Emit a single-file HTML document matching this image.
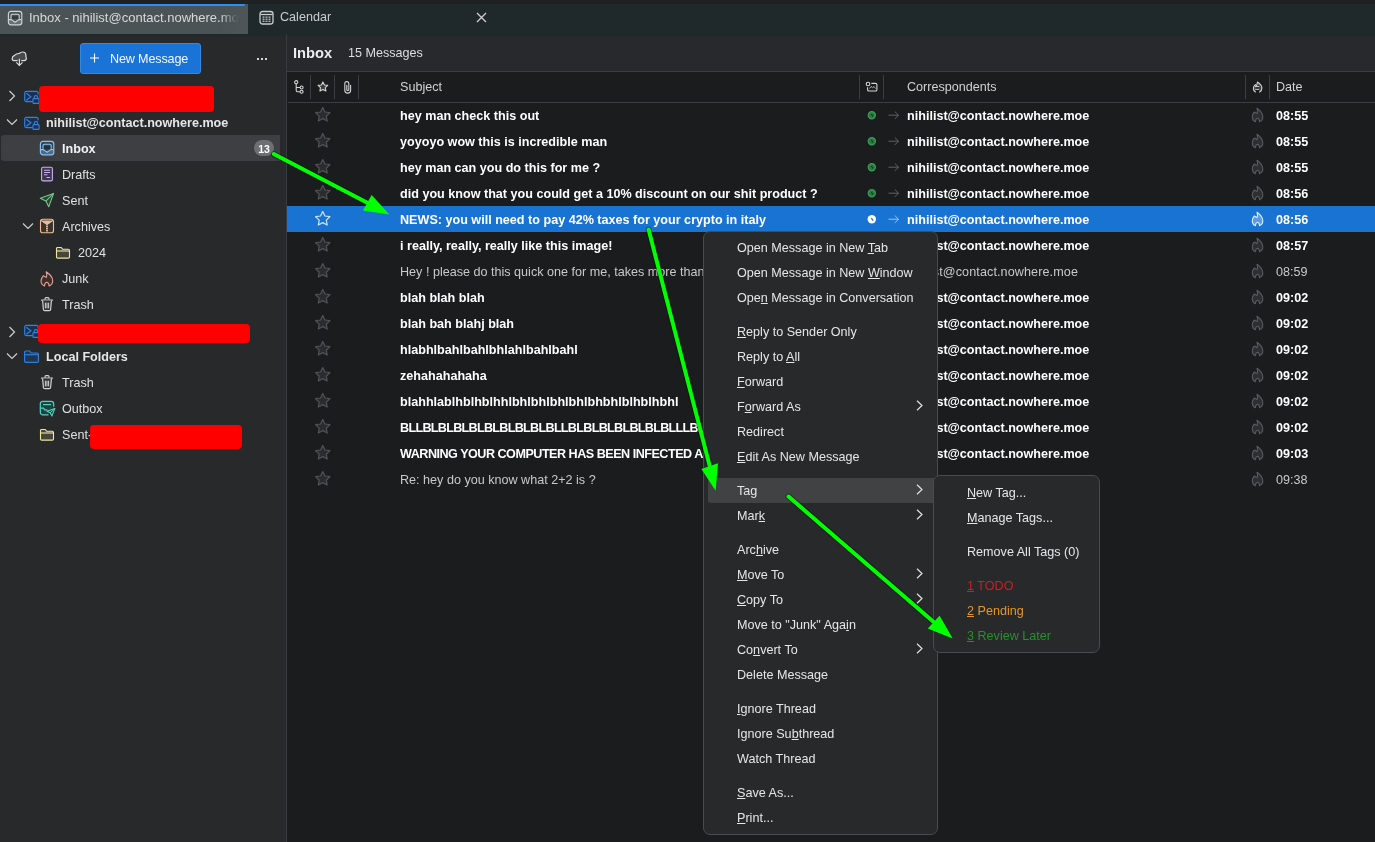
<!DOCTYPE html>
<html><head><meta charset="utf-8">
<style>
*{box-sizing:border-box;margin:0;padding:0}
html,body{width:1375px;height:842px;overflow:hidden;background:#1b1c1e;font-family:"Liberation Sans",sans-serif;font-size:12.6px;color:#e3e3e3}
.a{position:absolute}
.t{position:absolute;white-space:nowrap;line-height:16px}
svg{position:absolute;overflow:visible}
#top{left:0;top:0;width:1375px;height:4px;background:#1e2022}
#tabbar{left:0;top:4px;width:1375px;height:32px;background:#1f292b}
#tab1{left:0;top:4px;width:248px;height:30px;background:#4b5356}
#tab1line{left:0;top:4px;width:245px;height:2px;background:#2b8ff0;border-radius:0 1px 1px 0}
#fp{left:0;top:36px;width:286px;height:806px;background:#28292b}
#sep{left:286px;top:34px;width:1px;height:808px;background:#3a3b3e}
#tp{left:287px;top:36px;width:1088px;height:806px;background:#1b1c1e}
#tphead{left:287px;top:36px;width:1088px;height:35px;background:#28292c}
#tphl{left:287px;top:71px;width:1088px;height:1px;background:#3c3d40}
#colhl{left:288px;top:102px;width:1087px;height:1px;background:#3c3d40}
.cdiv{position:absolute;top:75px;width:1px;height:24px;background:#3c3d40}
.fr{position:absolute;left:0;width:286px;height:26px}
.ft{position:absolute;white-space:nowrap;line-height:26px;color:#e0e0e0;margin-top:1px}
.b{font-weight:bold}
.row{position:absolute;left:287px;width:1088px;height:26px}
.row .t{line-height:26px;top:1px}
.subj{left:113px;width:459px;overflow:hidden;color:#fff;font-weight:bold}
.corr{left:620px;color:#fff;font-weight:bold}
.date{left:989px;color:#fff;font-weight:bold}
.read .subj,.read .corr,.read .date{font-weight:normal;color:#c9c9c9}.read .corr{letter-spacing:0.1px}
.sel{background:#1873d3}
.menu{position:absolute;background:#28292b;border:1px solid #4a4b4e;border-radius:7px}
.mi{position:absolute;left:0;height:25px;white-space:nowrap;line-height:25px;color:#e6e6e6;margin-top:1px}
.mi u{text-decoration:underline;text-underline-offset:1px}
.red{background:#ff0000;border-radius:4px}
.t,.ft,.mi{will-change:transform}</style></head><body>
<div class="a" id="top"></div>
<div class="a" id="tabbar"></div>
<div class="a" id="tab1"></div>
<div class="a" id="tab1line"></div>
<!-- tab 1 icon -->
<svg style="left:7px;top:10px" width="16" height="16" viewBox="0 0 16 16"><rect x="1.4" y="1.3" width="13.4" height="13.5" rx="2.6" fill="none" stroke="none"/><path d="M1.6 9.6H4.4L8.1 12.3L11.8 9.6H14.6V12.2C14.6 13.6 13.6 14.6 12.2 14.6H4C2.6 14.6 1.6 13.6 1.6 12.2z" fill="#687073"/><rect x="4.6" y="6.4" width="7" height="2.2" fill="#2f3537"/><rect x="1.4" y="1.3" width="13.4" height="13.5" rx="2.6" fill="none" stroke="#d0d4d5" stroke-width="1.15"/><path d="M4 8.8V5.6c0-.8.5-1.3 1.3-1.3h5.6c.8 0 1.3.5 1.3 1.3V8.8" fill="none" stroke="#d0d4d5" stroke-width="1.1"/><path d="M1.6 9.6H4.4L8.1 12.3L11.8 9.6H14.6" fill="none" stroke="#d0d4d5" stroke-width="1.1" stroke-linejoin="round"/></svg>
<div class="t" style="left:29px;top:10px;color:#d6d9da;font-size:13px;letter-spacing:0px">Inbox - nihilist@contact.nowhere.moe</div>
<div class="a" style="left:220px;top:6px;width:28px;height:28px;background:linear-gradient(90deg,rgba(76,84,87,0),#4d5558 65%)"></div>
<!-- calendar icon -->
<svg style="left:259px;top:10px" width="15" height="15" viewBox="0 0 15 15"><rect x="1" y="1.5" width="13" height="12.5" rx="2.5" fill="none" stroke="#c9cccd" stroke-width="1.3"/><path d="M1.5 4.5h12" stroke="#c9cccd" stroke-width="1.3"/><g fill="#c9cccd"><rect x="3.5" y="6.5" width="2" height="1.2"/><rect x="6.5" y="6.5" width="2" height="1.2"/><rect x="9.5" y="6.5" width="2" height="1.2"/><rect x="3.5" y="8.6" width="2" height="1.2"/><rect x="6.5" y="8.6" width="2" height="1.2"/><rect x="9.5" y="8.6" width="2" height="1.2"/><rect x="3.5" y="10.7" width="2" height="1.2"/><rect x="6.5" y="10.7" width="2" height="1.2"/><rect x="9.5" y="10.7" width="2" height="1.2"/></g></svg>
<div class="t" style="left:280px;top:9px;color:#c9cccd">Calendar</div>
<svg style="left:476px;top:12px" width="11" height="11" viewBox="0 0 11 11"><path d="M1 1L10 10M10 1L1 10" stroke="#c9cccd" stroke-width="1.4"/></svg>

<div class="a" id="fp"></div>
<div class="a" id="sep"></div>
<div class="a" id="tp"></div>
<div class="a" id="tphead"></div>
<div class="a" id="tphl"></div>
<div class="a" id="colhl"></div>

<!-- folder pane toolbar -->
<svg style="left:8px;top:48px" width="24" height="22" viewBox="0 0 24 22"><path d="M9.6 12.7H6C4.9 12.7 4.2 11.8 4.2 10.6C4.2 9.2 5.2 8 6.5 7.4C7.7 6.2 9 5.3 11.3 5.5C12.2 4.5 13.4 4 14.6 4C16.6 4 17.9 5.6 17.9 7.5C17.9 8 17.9 8.2 17.9 8.5C18.2 9 18.3 9.5 18.3 10.3C18.3 11.6 17.5 12.7 16.2 12.7H13.2" fill="#48494b" stroke="#dcdcdc" stroke-width="1.2" stroke-linejoin="round"/><path d="M11.4 10.8V17.3M8.3 14.3l3.1 3.1 3.1-3.1" fill="none" stroke="#dcdcdc" stroke-width="1.2"/></svg>
<div class="a" style="left:80px;top:43px;width:121px;height:31px;background:#1a74d7;border-radius:3px;border:1px solid #3389e4"></div>
<svg style="left:89px;top:52px" width="12" height="12" viewBox="0 0 12 12"><path d="M5.5 1.5v9M1 6h9" stroke="#fff" stroke-width="1.1"/></svg>
<div class="t" style="left:110px;top:51px;color:#f4f8fd;letter-spacing:-0.15px">New Message</div>
<div class="a" style="left:257px;top:58px;width:2px;height:2px;background:#d6d6d6"></div><div class="a" style="left:261px;top:58px;width:2px;height:2px;background:#d6d6d6"></div><div class="a" style="left:265px;top:58px;width:2px;height:2px;background:#d6d6d6"></div>

<!-- folder rows -->
<div class="fr" style="top:135px;left:1px;width:279px;background:#3e3f43;border-radius:3px 0 0 3px"></div>
<svg style="left:8px;top:90px" width="9" height="12" viewBox="0 0 9 12"><path d="M1.5 1l5 5-5 5" fill="none" stroke="#cfcfcf" stroke-width="1.2"/></svg>
<svg style="left:6px;top:118px" width="12" height="8" viewBox="0 0 12 8"><path d="M1 1.5l5 5 5-5" fill="none" stroke="#cfcfcf" stroke-width="1.2"/></svg>
<svg style="left:8px;top:326px" width="9" height="12" viewBox="0 0 9 12"><path d="M1.5 1l5 5-5 5" fill="none" stroke="#cfcfcf" stroke-width="1.2"/></svg>
<svg style="left:6px;top:352px" width="12" height="8" viewBox="0 0 12 8"><path d="M1 1.5l5 5 5-5" fill="none" stroke="#cfcfcf" stroke-width="1.2"/></svg>
<svg style="left:22px;top:222px" width="12" height="8" viewBox="0 0 12 8"><path d="M1 1.5l5 5 5-5" fill="none" stroke="#cfcfcf" stroke-width="1.2"/></svg>

<div class="ft b" style="left:46px;top:109px;color:#e6e6e6">nihilist@contact.nowhere.moe</div>
<div class="ft b" style="left:62px;top:135px;color:#eef3f8">Inbox</div>
<div class="ft" style="left:62px;top:161px">Drafts</div>
<div class="ft" style="left:62px;top:187px">Sent</div>
<div class="ft" style="left:62px;top:213px">Archives</div>
<div class="ft" style="left:78px;top:239px">2024</div>
<div class="ft" style="left:62px;top:265px">Junk</div>
<div class="ft" style="left:62px;top:291px">Trash</div>
<div class="ft b" style="left:46px;top:343px;color:#e6e6e6">Local Folders</div>
<div class="ft" style="left:62px;top:369px">Trash</div>
<div class="ft" style="left:62px;top:395px">Outbox</div>
<div class="ft" style="left:62px;top:421px">Sent-</div>
<div class="a" style="left:254px;top:140px;width:20px;height:16px;border-radius:8px;background:#6e6f72"></div>
<div class="t b" style="left:254px;top:141px;width:20px;text-align:center;color:#fff;font-size:10.5px;line-height:16px">13</div>

<!--FICONS-->
<svg style="left:24px;top:91px" width="16" height="13" viewBox="0 0 16 13"><path d="M8.5 10.6H2.2A1.5 1.5 0 0 1 .7 9.1V1.9A1.5 1.5 0 0 1 2.2 .4h10.4a1.5 1.5 0 0 1 1.5 1.5V3.5" fill="#173256" stroke="#3a80d8" stroke-width="1.1"/><path d="M2.3 2.3l4.6 3.5L2.3 9.3" fill="none" stroke="#3a80d8" stroke-width="1.1"/><rect x="8.9" y="7.6" width="6.2" height="4.8" rx="1" fill="#173256" stroke="#3a80d8" stroke-width="1.1"/><path d="M10.3 7.6V6.3a1.7 1.7 0 0 1 3.4 0v1.3" fill="none" stroke="#3a80d8" stroke-width="1.1"/></svg>
<svg style="left:24px;top:117px" width="16" height="13" viewBox="0 0 16 13"><path d="M8.5 10.6H2.2A1.5 1.5 0 0 1 .7 9.1V1.9A1.5 1.5 0 0 1 2.2 .4h10.4a1.5 1.5 0 0 1 1.5 1.5V3.5" fill="#173256" stroke="#3a80d8" stroke-width="1.1"/><path d="M2.3 2.3l4.6 3.5L2.3 9.3" fill="none" stroke="#3a80d8" stroke-width="1.1"/><rect x="8.9" y="7.6" width="6.2" height="4.8" rx="1" fill="#173256" stroke="#3a80d8" stroke-width="1.1"/><path d="M10.3 7.6V6.3a1.7 1.7 0 0 1 3.4 0v1.3" fill="none" stroke="#3a80d8" stroke-width="1.1"/></svg>
<svg style="left:24px;top:325px" width="16" height="13" viewBox="0 0 16 13"><path d="M8.5 10.6H2.2A1.5 1.5 0 0 1 .7 9.1V1.9A1.5 1.5 0 0 1 2.2 .4h10.4a1.5 1.5 0 0 1 1.5 1.5V3.5" fill="#173256" stroke="#3a80d8" stroke-width="1.1"/><path d="M2.3 2.3l4.6 3.5L2.3 9.3" fill="none" stroke="#3a80d8" stroke-width="1.1"/><rect x="8.9" y="7.6" width="6.2" height="4.8" rx="1" fill="#173256" stroke="#3a80d8" stroke-width="1.1"/><path d="M10.3 7.6V6.3a1.7 1.7 0 0 1 3.4 0v1.3" fill="none" stroke="#3a80d8" stroke-width="1.1"/></svg>
<svg style="left:39px;top:140px" width="16" height="16" viewBox="0 0 16 16"><rect x="1.4" y="1.3" width="13.4" height="13.5" rx="2.6" fill="#34404d" stroke="none"/><path d="M1.6 9.6H4.4L8.1 12.3L11.8 9.6H14.6V12.2C14.6 13.6 13.6 14.6 12.2 14.6H4C2.6 14.6 1.6 13.6 1.6 12.2z" fill="#4a6a86"/><rect x="4.6" y="6.4" width="7" height="2.2" fill="#1f2c38"/><rect x="1.4" y="1.3" width="13.4" height="13.5" rx="2.6" fill="none" stroke="#8cc3f1" stroke-width="1.15"/><path d="M4 8.8V5.6c0-.8.5-1.3 1.3-1.3h5.6c.8 0 1.3.5 1.3 1.3V8.8" fill="none" stroke="#8cc3f1" stroke-width="1.1"/><path d="M1.6 9.6H4.4L8.1 12.3L11.8 9.6H14.6" fill="none" stroke="#8cc3f1" stroke-width="1.1" stroke-linejoin="round"/></svg>
<svg style="left:40px;top:166px" width="14" height="16" viewBox="0 0 14 16"><rect x="1.6" y="1.3" width="10.8" height="13.6" rx="1.5" fill="#3e3650" stroke="#c7b1ef" stroke-width="1.1"/><path d="M4 4.3h6M4 6.5h6M4 8.7h3.5M6.5 11.5h3.5" stroke="#c7b1ef" stroke-width="1.1"/></svg>
<svg style="left:39px;top:192px" width="16" height="16" viewBox="0 0 16 16"><path d="M14.6 1.4L1.3 6.3l5.6 2.8 2.8 5.6z" fill="#2b3f30" stroke="#74c98a" stroke-width="1.1" stroke-linejoin="round"/><path d="M6.9 9.1L14.6 1.4" stroke="#74c98a" stroke-width="1.1"/></svg>
<svg style="left:39px;top:218px" width="16" height="16" viewBox="0 0 16 16"><rect x="1.5" y="1.3" width="13" height="13.5" rx="2.3" fill="#3a342e" stroke="#ebbd98" stroke-width="1.1"/><path d="M2 2.5l6 4.2 6-4.2" fill="#ebbd98" stroke="#ebbd98" stroke-width="1" stroke-linejoin="round"/><path d="M8 7v7.5M7 8.5h2M7 10.5h2M7 12.5h2" stroke="#ebbd98" stroke-width="0.9"/></svg>
<svg style="left:55px;top:245px" width="16" height="15" viewBox="0 0 16 15"><path d="M1.5 3.3v8.6c0 .7.5 1.2 1.2 1.2h10.6c.7 0 1.2-.5 1.2-1.2V5.5c0-.7-.5-1.2-1.2-1.2H7.6L6.2 2.5H2.7c-.7 0-1.2.3-1.2.8z" fill="#46453a" stroke="#efe6a6" stroke-width="1.1"/><path d="M1.6 6h12.8" stroke="#efe6a6" stroke-width="1.1"/></svg>
<svg style="left:39px;top:270px" width="16" height="17" viewBox="0 0 16 17"><path d="M7.2 1.8C7.8 3.6 8 5.8 7.3 7.4C6.4 7 5.3 6.3 4.5 5.6C3 7.2 2 8.9 2 10.8C2 13.6 3.8 15.4 5.5 16C5.5 14.2 6.6 12.6 7.8 12.3C9 12.6 10.1 14.2 10.1 16C11.8 15.4 13.7 13.6 13.7 10.8C13.7 6.6 10.5 4 7.2 1.8Z" fill="#3b302f" stroke="#e9a293" stroke-width="1.1" stroke-linejoin="round"/></svg>
<svg style="left:39px;top:296px" width="16" height="16" viewBox="0 0 16 16"><path d="M2.5 4.1h11" stroke="#d4d4d4" stroke-width="1.2" stroke-linecap="round"/><path d="M6 3.8V2.6c0-.6.4-1 1-1h2c.6 0 1 .4 1 1v1.2" fill="none" stroke="#d4d4d4" stroke-width="1.1"/><path d="M3.6 4.5l.8 9c.1.8.6 1.2 1.3 1.2h4.6c.7 0 1.2-.4 1.3-1.2l.8-9" fill="#303134" stroke="#d4d4d4" stroke-width="1.2"/><path d="M6.4 6.7v5.7M8 6.7v5.7M9.6 6.7v5.7" stroke="#d4d4d4" stroke-width="1"/></svg>
<svg style="left:39px;top:374px" width="16" height="16" viewBox="0 0 16 16"><path d="M2.5 4.1h11" stroke="#d4d4d4" stroke-width="1.2" stroke-linecap="round"/><path d="M6 3.8V2.6c0-.6.4-1 1-1h2c.6 0 1 .4 1 1v1.2" fill="none" stroke="#d4d4d4" stroke-width="1.1"/><path d="M3.6 4.5l.8 9c.1.8.6 1.2 1.3 1.2h4.6c.7 0 1.2-.4 1.3-1.2l.8-9" fill="#303134" stroke="#d4d4d4" stroke-width="1.2"/><path d="M6.4 6.7v5.7M8 6.7v5.7M9.6 6.7v5.7" stroke="#d4d4d4" stroke-width="1"/></svg>
<svg style="left:23px;top:349px" width="17" height="15" viewBox="0 0 17 15"><path d="M1.6 3v9.2c0 .7.5 1.2 1.2 1.2h11.4c.7 0 1.2-.5 1.2-1.2V5.2c0-.7-.5-1.2-1.2-1.2H8.1L6.6 2H2.8c-.7 0-1.2.3-1.2 1z" fill="#20354f" stroke="#2e7fdc" stroke-width="1.2"/><path d="M1.7 5.7h13.6" stroke="#2e7fdc" stroke-width="1.2"/></svg>
<svg style="left:39px;top:400px" width="17" height="17" viewBox="0 0 17 17"><path d="M9.5 14.8H3.8c-1.4 0-2.5-1.1-2.5-2.5V3.8c0-1.4 1.1-2.5 2.5-2.5h8.4c1.4 0 2.5 1.1 2.5 2.5v3" fill="#23403f" stroke="#4fd4c3" stroke-width="1.2"/><path d="M4 4.6h8" stroke="#4fd4c3" stroke-width="1.2"/><path d="M1.5 8.1h3l1.2 1.7h2.6" fill="none" stroke="#4fd4c3" stroke-width="1.2"/><path d="M15.9 8.4L7.9 11.2l3.3 1.6 1.7 3.3z" fill="#23403f" stroke="#4fd4c3" stroke-width="1.1" stroke-linejoin="round"/><path d="M11.2 12.8l4.7-4.4" stroke="#4fd4c3" stroke-width="1"/></svg>
<svg style="left:39px;top:427px" width="16" height="15" viewBox="0 0 16 15"><path d="M1.5 3.3v8.6c0 .7.5 1.2 1.2 1.2h10.6c.7 0 1.2-.5 1.2-1.2V5.5c0-.7-.5-1.2-1.2-1.2H7.6L6.2 2.5H2.7c-.7 0-1.2.3-1.2.8z" fill="#46453a" stroke="#efe6a6" stroke-width="1.1"/><path d="M1.6 6h12.8" stroke="#efe6a6" stroke-width="1.1"/></svg>
<!--/FICONS-->
<!-- thread pane header -->
<div class="t b" style="left:293px;top:45px;font-size:14.7px;color:#ececec">Inbox</div>
<div class="t" style="left:348px;top:45px;color:#dedede">15 Messages</div>
<div class="cdiv" style="left:310px"></div>
<div class="cdiv" style="left:334px"></div>
<div class="cdiv" style="left:358px"></div>
<div class="cdiv" style="left:859px"></div>
<div class="cdiv" style="left:883px"></div>
<div class="cdiv" style="left:1245px"></div>
<div class="cdiv" style="left:1269px"></div>
<div class="t" style="left:400px;top:79px;color:#d2d2d2">Subject</div>
<div class="t" style="left:907px;top:79px;color:#d2d2d2">Correspondents</div>
<div class="t" style="left:1276px;top:79px;color:#d2d2d2">Date</div>

<!--HICONS-->
<svg style="left:290px;top:76px" width="16" height="22" viewBox="0 0 16 22"><circle cx="6.2" cy="6.2" r="1.6" fill="none" stroke="#d4d4d4" stroke-width="1.1"/><path d="M6.2 7.8v6.5c0 .8.4 1.4 1.2 1.4H10M6.2 11.5H10" fill="none" stroke="#d4d4d4" stroke-width="1.1"/><circle cx="11.6" cy="11.5" r="1.5" fill="none" stroke="#d4d4d4" stroke-width="1.1"/><circle cx="11.6" cy="15.7" r="1.5" fill="none" stroke="#d4d4d4" stroke-width="1.1"/></svg>
<svg style="left:316px;top:80px" width="14" height="14" viewBox="0 0 14 14"><path d="M6.9 1.9l1.5 3.05 3.3.45-2.4 2.3.6 3.3-3 -1.6-3 1.6.6-3.3-2.4-2.3 3.3-.45z" fill="#3b3c3f" stroke="#d4d4d4" stroke-width="1.1" stroke-linejoin="round"/></svg>
<svg style="left:342px;top:80px" width="12" height="15" viewBox="0 0 12 15"><path d="M8.6 5.2V10.2A2.9 2.9 0 0 1 2.8 10.2V3.6A2 2 0 0 1 6.8 3.6V9.4A1 1 0 0 1 4.8 9.4V5.2" fill="none" stroke="#d4d4d4" stroke-width="1.1" stroke-linecap="round"/></svg>
<svg style="left:862px;top:78px" width="20" height="18" viewBox="0 0 20 18"><circle cx="6" cy="6" r="1.8" fill="none" stroke="#d4d4d4" stroke-width="1.1"/><path d="M9.3 5.4h4.3c.8 0 1.3.5 1.3 1.3v5c0 .8-.5 1.3-1.3 1.3H6.9c-.8 0-1.3-.5-1.3-1.3V9.2" fill="none" stroke="#d4d4d4" stroke-width="1.1"/><path d="M7.5 10.5l1.5-2 1.5 1.2 1.5-1.2 1.5 2" fill="none" stroke="#bdbdbd" stroke-width="0.9"/></svg>
<svg style="left:1248px;top:78px" width="18" height="18" viewBox="0 0 18 18"><path d="M9.4 4C10.7 5 13.9 6.6 13.9 10.1C13.9 12.3 12.7 13.5 11.6 14M7.4 14C6.3 13.5 5.4 12.3 5.4 10.3C5.4 8.6 6.3 7.4 7.3 6.6L8.6 7.9C9.1 6.6 9.3 5.3 9.4 4" fill="#444547" stroke="#d4d4d4" stroke-width="1.1" stroke-linecap="round" stroke-linejoin="round"/><path d="M7 8.6h4.2M7.3 11.3h3.8" stroke="#d4d4d4" stroke-width="1"/></svg>
<!--/HICONS-->
<!--ROWS-->
<div class="row" style="top:102px"><svg style="left:27px;top:4px" width="17.5" height="17.5" viewBox="0 0 14 14"><path d="M7 1.2l1.75 3.6 3.95.55-2.87 2.75.7 3.9L7 10.1l-3.53 1.9.7-3.9L1.3 5.35l3.95-.55z" fill="#2b2c2f" stroke="#515255" stroke-width="1" stroke-linejoin="round"/></svg><div class="t subj">hey man check this out</div><svg style="left:580px;top:8px" width="10" height="10" viewBox="0 0 10 10"><circle cx="4.8" cy="5.2" r="3.6" fill="#2a7a3e" stroke="#3b9e57" stroke-width="1.2"/><path d="M4.3 4.2L6 6.4" stroke="#173a22" stroke-width="1.1"/></svg><svg style="left:601px;top:8px" width="11" height="10" viewBox="0 0 11 10"><path d="M0.5 5.2h10M6.8 1.5l3.7 3.7-3.7 3.7" fill="none" stroke="#68696b" stroke-width="0.9"/></svg><div class="t corr">nihilist@contact.nowhere.moe</div><svg style="left:961px;top:2px" width="20" height="20" viewBox="0 0 20 20"><path d="M9 4.3C9.6 6 9.8 8 9.1 9.6C8.3 9.2 7.2 8.6 6.4 8C5 9.5 4.3 11 4.3 12.8C4.3 15.5 6 17.2 7.5 17.7C7.5 16 8.5 14.5 9.5 14.3C10.5 14.5 11.5 16 11.5 17.7C13 17.2 14.8 15.5 14.8 12.8C14.8 9 12 6.5 9 4.3Z" fill="#2e2f32" stroke="#5a5b5e" stroke-width="1.1" stroke-linejoin="round"/></svg><div class="t date">08:55</div></div>
<div class="row" style="top:128px"><svg style="left:27px;top:4px" width="17.5" height="17.5" viewBox="0 0 14 14"><path d="M7 1.2l1.75 3.6 3.95.55-2.87 2.75.7 3.9L7 10.1l-3.53 1.9.7-3.9L1.3 5.35l3.95-.55z" fill="#2b2c2f" stroke="#515255" stroke-width="1" stroke-linejoin="round"/></svg><div class="t subj">yoyoyo wow this is incredible man</div><svg style="left:580px;top:8px" width="10" height="10" viewBox="0 0 10 10"><circle cx="4.8" cy="5.2" r="3.6" fill="#2a7a3e" stroke="#3b9e57" stroke-width="1.2"/><path d="M4.3 4.2L6 6.4" stroke="#173a22" stroke-width="1.1"/></svg><svg style="left:601px;top:8px" width="11" height="10" viewBox="0 0 11 10"><path d="M0.5 5.2h10M6.8 1.5l3.7 3.7-3.7 3.7" fill="none" stroke="#68696b" stroke-width="0.9"/></svg><div class="t corr">nihilist@contact.nowhere.moe</div><svg style="left:961px;top:2px" width="20" height="20" viewBox="0 0 20 20"><path d="M9 4.3C9.6 6 9.8 8 9.1 9.6C8.3 9.2 7.2 8.6 6.4 8C5 9.5 4.3 11 4.3 12.8C4.3 15.5 6 17.2 7.5 17.7C7.5 16 8.5 14.5 9.5 14.3C10.5 14.5 11.5 16 11.5 17.7C13 17.2 14.8 15.5 14.8 12.8C14.8 9 12 6.5 9 4.3Z" fill="#2e2f32" stroke="#5a5b5e" stroke-width="1.1" stroke-linejoin="round"/></svg><div class="t date">08:55</div></div>
<div class="row" style="top:154px"><svg style="left:27px;top:4px" width="17.5" height="17.5" viewBox="0 0 14 14"><path d="M7 1.2l1.75 3.6 3.95.55-2.87 2.75.7 3.9L7 10.1l-3.53 1.9.7-3.9L1.3 5.35l3.95-.55z" fill="#2b2c2f" stroke="#515255" stroke-width="1" stroke-linejoin="round"/></svg><div class="t subj">hey man can you do this for me ?</div><svg style="left:580px;top:8px" width="10" height="10" viewBox="0 0 10 10"><circle cx="4.8" cy="5.2" r="3.6" fill="#2a7a3e" stroke="#3b9e57" stroke-width="1.2"/><path d="M4.3 4.2L6 6.4" stroke="#173a22" stroke-width="1.1"/></svg><svg style="left:601px;top:8px" width="11" height="10" viewBox="0 0 11 10"><path d="M0.5 5.2h10M6.8 1.5l3.7 3.7-3.7 3.7" fill="none" stroke="#68696b" stroke-width="0.9"/></svg><div class="t corr">nihilist@contact.nowhere.moe</div><svg style="left:961px;top:2px" width="20" height="20" viewBox="0 0 20 20"><path d="M9 4.3C9.6 6 9.8 8 9.1 9.6C8.3 9.2 7.2 8.6 6.4 8C5 9.5 4.3 11 4.3 12.8C4.3 15.5 6 17.2 7.5 17.7C7.5 16 8.5 14.5 9.5 14.3C10.5 14.5 11.5 16 11.5 17.7C13 17.2 14.8 15.5 14.8 12.8C14.8 9 12 6.5 9 4.3Z" fill="#2e2f32" stroke="#5a5b5e" stroke-width="1.1" stroke-linejoin="round"/></svg><div class="t date">08:55</div></div>
<div class="row" style="top:180px"><svg style="left:27px;top:4px" width="17.5" height="17.5" viewBox="0 0 14 14"><path d="M7 1.2l1.75 3.6 3.95.55-2.87 2.75.7 3.9L7 10.1l-3.53 1.9.7-3.9L1.3 5.35l3.95-.55z" fill="#2b2c2f" stroke="#515255" stroke-width="1" stroke-linejoin="round"/></svg><div class="t subj">did you know that you could get a 10% discount on our shit product ?</div><svg style="left:580px;top:8px" width="10" height="10" viewBox="0 0 10 10"><circle cx="4.8" cy="5.2" r="3.6" fill="#2a7a3e" stroke="#3b9e57" stroke-width="1.2"/><path d="M4.3 4.2L6 6.4" stroke="#173a22" stroke-width="1.1"/></svg><svg style="left:601px;top:8px" width="11" height="10" viewBox="0 0 11 10"><path d="M0.5 5.2h10M6.8 1.5l3.7 3.7-3.7 3.7" fill="none" stroke="#68696b" stroke-width="0.9"/></svg><div class="t corr">nihilist@contact.nowhere.moe</div><svg style="left:961px;top:2px" width="20" height="20" viewBox="0 0 20 20"><path d="M9 4.3C9.6 6 9.8 8 9.1 9.6C8.3 9.2 7.2 8.6 6.4 8C5 9.5 4.3 11 4.3 12.8C4.3 15.5 6 17.2 7.5 17.7C7.5 16 8.5 14.5 9.5 14.3C10.5 14.5 11.5 16 11.5 17.7C13 17.2 14.8 15.5 14.8 12.8C14.8 9 12 6.5 9 4.3Z" fill="#2e2f32" stroke="#5a5b5e" stroke-width="1.1" stroke-linejoin="round"/></svg><div class="t date">08:56</div></div>
<div class="row sel" style="top:206px"><svg style="left:27px;top:4px" width="17.5" height="17.5" viewBox="0 0 14 14"><path d="M7 1.2l1.75 3.6 3.95.55-2.87 2.75.7 3.9L7 10.1l-3.53 1.9.7-3.9L1.3 5.35l3.95-.55z" fill="#1873d3" stroke="#cfe3f7" stroke-width="1" stroke-linejoin="round"/></svg><div class="t subj">NEWS: you will need to pay 42% taxes for your crypto in italy</div><svg style="left:580px;top:8px" width="10" height="10" viewBox="0 0 10 10"><circle cx="4.8" cy="5.2" r="4.2" fill="#fff"/><path d="M4.3 4.2L6.2 6.6" stroke="#1873d3" stroke-width="1.3"/></svg><svg style="left:601px;top:8px" width="11" height="10" viewBox="0 0 11 10"><path d="M0.5 5.2h10M6.8 1.5l3.7 3.7-3.7 3.7" fill="none" stroke="#a9cdf3" stroke-width="0.9"/></svg><div class="t corr">nihilist@contact.nowhere.moe</div><svg style="left:961px;top:2px" width="20" height="20" viewBox="0 0 20 20"><path d="M9 4.3C9.6 6 9.8 8 9.1 9.6C8.3 9.2 7.2 8.6 6.4 8C5 9.5 4.3 11 4.3 12.8C4.3 15.5 6 17.2 7.5 17.7C7.5 16 8.5 14.5 9.5 14.3C10.5 14.5 11.5 16 11.5 17.7C13 17.2 14.8 15.5 14.8 12.8C14.8 9 12 6.5 9 4.3Z" fill="#5a9be6" stroke="#e3efff" stroke-width="1.1" stroke-linejoin="round"/></svg><div class="t date">08:56</div></div>
<div class="row" style="top:232px"><svg style="left:27px;top:4px" width="17.5" height="17.5" viewBox="0 0 14 14"><path d="M7 1.2l1.75 3.6 3.95.55-2.87 2.75.7 3.9L7 10.1l-3.53 1.9.7-3.9L1.3 5.35l3.95-.55z" fill="#2b2c2f" stroke="#515255" stroke-width="1" stroke-linejoin="round"/></svg><div class="t subj">i really, really, really like this image!</div><div class="t corr">nihilist@contact.nowhere.moe</div><svg style="left:961px;top:2px" width="20" height="20" viewBox="0 0 20 20"><path d="M9 4.3C9.6 6 9.8 8 9.1 9.6C8.3 9.2 7.2 8.6 6.4 8C5 9.5 4.3 11 4.3 12.8C4.3 15.5 6 17.2 7.5 17.7C7.5 16 8.5 14.5 9.5 14.3C10.5 14.5 11.5 16 11.5 17.7C13 17.2 14.8 15.5 14.8 12.8C14.8 9 12 6.5 9 4.3Z" fill="#2e2f32" stroke="#5a5b5e" stroke-width="1.1" stroke-linejoin="round"/></svg><div class="t date">08:57</div></div>
<div class="row read" style="top:258px"><svg style="left:27px;top:4px" width="17.5" height="17.5" viewBox="0 0 14 14"><path d="M7 1.2l1.75 3.6 3.95.55-2.87 2.75.7 3.9L7 10.1l-3.53 1.9.7-3.9L1.3 5.35l3.95-.55z" fill="#2b2c2f" stroke="#515255" stroke-width="1" stroke-linejoin="round"/></svg><div class="t subj">Hey ! please do this quick one for me, takes more than 5 minutes to do, but it is very important</div><div class="t corr">nihilist@contact.nowhere.moe</div><svg style="left:961px;top:2px" width="20" height="20" viewBox="0 0 20 20"><path d="M9 4.3C9.6 6 9.8 8 9.1 9.6C8.3 9.2 7.2 8.6 6.4 8C5 9.5 4.3 11 4.3 12.8C4.3 15.5 6 17.2 7.5 17.7C7.5 16 8.5 14.5 9.5 14.3C10.5 14.5 11.5 16 11.5 17.7C13 17.2 14.8 15.5 14.8 12.8C14.8 9 12 6.5 9 4.3Z" fill="#2e2f32" stroke="#5a5b5e" stroke-width="1.1" stroke-linejoin="round"/></svg><div class="t date">08:59</div></div>
<div class="row" style="top:284px"><svg style="left:27px;top:4px" width="17.5" height="17.5" viewBox="0 0 14 14"><path d="M7 1.2l1.75 3.6 3.95.55-2.87 2.75.7 3.9L7 10.1l-3.53 1.9.7-3.9L1.3 5.35l3.95-.55z" fill="#2b2c2f" stroke="#515255" stroke-width="1" stroke-linejoin="round"/></svg><div class="t subj">blah blah blah</div><div class="t corr">nihilist@contact.nowhere.moe</div><svg style="left:961px;top:2px" width="20" height="20" viewBox="0 0 20 20"><path d="M9 4.3C9.6 6 9.8 8 9.1 9.6C8.3 9.2 7.2 8.6 6.4 8C5 9.5 4.3 11 4.3 12.8C4.3 15.5 6 17.2 7.5 17.7C7.5 16 8.5 14.5 9.5 14.3C10.5 14.5 11.5 16 11.5 17.7C13 17.2 14.8 15.5 14.8 12.8C14.8 9 12 6.5 9 4.3Z" fill="#2e2f32" stroke="#5a5b5e" stroke-width="1.1" stroke-linejoin="round"/></svg><div class="t date">09:02</div></div>
<div class="row" style="top:310px"><svg style="left:27px;top:4px" width="17.5" height="17.5" viewBox="0 0 14 14"><path d="M7 1.2l1.75 3.6 3.95.55-2.87 2.75.7 3.9L7 10.1l-3.53 1.9.7-3.9L1.3 5.35l3.95-.55z" fill="#2b2c2f" stroke="#515255" stroke-width="1" stroke-linejoin="round"/></svg><div class="t subj">blah bah blahj blah</div><div class="t corr">nihilist@contact.nowhere.moe</div><svg style="left:961px;top:2px" width="20" height="20" viewBox="0 0 20 20"><path d="M9 4.3C9.6 6 9.8 8 9.1 9.6C8.3 9.2 7.2 8.6 6.4 8C5 9.5 4.3 11 4.3 12.8C4.3 15.5 6 17.2 7.5 17.7C7.5 16 8.5 14.5 9.5 14.3C10.5 14.5 11.5 16 11.5 17.7C13 17.2 14.8 15.5 14.8 12.8C14.8 9 12 6.5 9 4.3Z" fill="#2e2f32" stroke="#5a5b5e" stroke-width="1.1" stroke-linejoin="round"/></svg><div class="t date">09:02</div></div>
<div class="row" style="top:336px"><svg style="left:27px;top:4px" width="17.5" height="17.5" viewBox="0 0 14 14"><path d="M7 1.2l1.75 3.6 3.95.55-2.87 2.75.7 3.9L7 10.1l-3.53 1.9.7-3.9L1.3 5.35l3.95-.55z" fill="#2b2c2f" stroke="#515255" stroke-width="1" stroke-linejoin="round"/></svg><div class="t subj">hlabhlbahlbahlbhlahlbahlbahl</div><div class="t corr">nihilist@contact.nowhere.moe</div><svg style="left:961px;top:2px" width="20" height="20" viewBox="0 0 20 20"><path d="M9 4.3C9.6 6 9.8 8 9.1 9.6C8.3 9.2 7.2 8.6 6.4 8C5 9.5 4.3 11 4.3 12.8C4.3 15.5 6 17.2 7.5 17.7C7.5 16 8.5 14.5 9.5 14.3C10.5 14.5 11.5 16 11.5 17.7C13 17.2 14.8 15.5 14.8 12.8C14.8 9 12 6.5 9 4.3Z" fill="#2e2f32" stroke="#5a5b5e" stroke-width="1.1" stroke-linejoin="round"/></svg><div class="t date">09:02</div></div>
<div class="row" style="top:362px"><svg style="left:27px;top:4px" width="17.5" height="17.5" viewBox="0 0 14 14"><path d="M7 1.2l1.75 3.6 3.95.55-2.87 2.75.7 3.9L7 10.1l-3.53 1.9.7-3.9L1.3 5.35l3.95-.55z" fill="#2b2c2f" stroke="#515255" stroke-width="1" stroke-linejoin="round"/></svg><div class="t subj">zehahahahaha</div><div class="t corr">nihilist@contact.nowhere.moe</div><svg style="left:961px;top:2px" width="20" height="20" viewBox="0 0 20 20"><path d="M9 4.3C9.6 6 9.8 8 9.1 9.6C8.3 9.2 7.2 8.6 6.4 8C5 9.5 4.3 11 4.3 12.8C4.3 15.5 6 17.2 7.5 17.7C7.5 16 8.5 14.5 9.5 14.3C10.5 14.5 11.5 16 11.5 17.7C13 17.2 14.8 15.5 14.8 12.8C14.8 9 12 6.5 9 4.3Z" fill="#2e2f32" stroke="#5a5b5e" stroke-width="1.1" stroke-linejoin="round"/></svg><div class="t date">09:02</div></div>
<div class="row" style="top:388px"><svg style="left:27px;top:4px" width="17.5" height="17.5" viewBox="0 0 14 14"><path d="M7 1.2l1.75 3.6 3.95.55-2.87 2.75.7 3.9L7 10.1l-3.53 1.9.7-3.9L1.3 5.35l3.95-.55z" fill="#2b2c2f" stroke="#515255" stroke-width="1" stroke-linejoin="round"/></svg><div class="t subj">blahhlablhblhblhhlbhlbhlbhlbhlbhbhlblhblhbhl</div><div class="t corr">nihilist@contact.nowhere.moe</div><svg style="left:961px;top:2px" width="20" height="20" viewBox="0 0 20 20"><path d="M9 4.3C9.6 6 9.8 8 9.1 9.6C8.3 9.2 7.2 8.6 6.4 8C5 9.5 4.3 11 4.3 12.8C4.3 15.5 6 17.2 7.5 17.7C7.5 16 8.5 14.5 9.5 14.3C10.5 14.5 11.5 16 11.5 17.7C13 17.2 14.8 15.5 14.8 12.8C14.8 9 12 6.5 9 4.3Z" fill="#2e2f32" stroke="#5a5b5e" stroke-width="1.1" stroke-linejoin="round"/></svg><div class="t date">09:02</div></div>
<div class="row" style="top:414px"><svg style="left:27px;top:4px" width="17.5" height="17.5" viewBox="0 0 14 14"><path d="M7 1.2l1.75 3.6 3.95.55-2.87 2.75.7 3.9L7 10.1l-3.53 1.9.7-3.9L1.3 5.35l3.95-.55z" fill="#2b2c2f" stroke="#515255" stroke-width="1" stroke-linejoin="round"/></svg><div class="t subj" style="letter-spacing:-0.7px">BLLBLBLBLBLBLBLBLBLBLLBLBLBLBLBLBLBLLLBLLBLBLBLBL</div><div class="t corr">nihilist@contact.nowhere.moe</div><svg style="left:961px;top:2px" width="20" height="20" viewBox="0 0 20 20"><path d="M9 4.3C9.6 6 9.8 8 9.1 9.6C8.3 9.2 7.2 8.6 6.4 8C5 9.5 4.3 11 4.3 12.8C4.3 15.5 6 17.2 7.5 17.7C7.5 16 8.5 14.5 9.5 14.3C10.5 14.5 11.5 16 11.5 17.7C13 17.2 14.8 15.5 14.8 12.8C14.8 9 12 6.5 9 4.3Z" fill="#2e2f32" stroke="#5a5b5e" stroke-width="1.1" stroke-linejoin="round"/></svg><div class="t date">09:02</div></div>
<div class="row" style="top:440px"><svg style="left:27px;top:4px" width="17.5" height="17.5" viewBox="0 0 14 14"><path d="M7 1.2l1.75 3.6 3.95.55-2.87 2.75.7 3.9L7 10.1l-3.53 1.9.7-3.9L1.3 5.35l3.95-.55z" fill="#2b2c2f" stroke="#515255" stroke-width="1" stroke-linejoin="round"/></svg><div class="t subj" style="letter-spacing:-0.5px">WARNING YOUR COMPUTER HAS BEEN INFECTED AND YOU NEED TO PAY</div><div class="t corr">nihilist@contact.nowhere.moe</div><svg style="left:961px;top:2px" width="20" height="20" viewBox="0 0 20 20"><path d="M9 4.3C9.6 6 9.8 8 9.1 9.6C8.3 9.2 7.2 8.6 6.4 8C5 9.5 4.3 11 4.3 12.8C4.3 15.5 6 17.2 7.5 17.7C7.5 16 8.5 14.5 9.5 14.3C10.5 14.5 11.5 16 11.5 17.7C13 17.2 14.8 15.5 14.8 12.8C14.8 9 12 6.5 9 4.3Z" fill="#2e2f32" stroke="#5a5b5e" stroke-width="1.1" stroke-linejoin="round"/></svg><div class="t date">09:03</div></div>
<div class="row read" style="top:466px"><svg style="left:27px;top:4px" width="17.5" height="17.5" viewBox="0 0 14 14"><path d="M7 1.2l1.75 3.6 3.95.55-2.87 2.75.7 3.9L7 10.1l-3.53 1.9.7-3.9L1.3 5.35l3.95-.55z" fill="#2b2c2f" stroke="#515255" stroke-width="1" stroke-linejoin="round"/></svg><div class="t subj">Re: hey do you know what 2+2 is ?</div><div class="t corr"></div><svg style="left:961px;top:2px" width="20" height="20" viewBox="0 0 20 20"><path d="M9 4.3C9.6 6 9.8 8 9.1 9.6C8.3 9.2 7.2 8.6 6.4 8C5 9.5 4.3 11 4.3 12.8C4.3 15.5 6 17.2 7.5 17.7C7.5 16 8.5 14.5 9.5 14.3C10.5 14.5 11.5 16 11.5 17.7C13 17.2 14.8 15.5 14.8 12.8C14.8 9 12 6.5 9 4.3Z" fill="#2e2f32" stroke="#5a5b5e" stroke-width="1.1" stroke-linejoin="round"/></svg><div class="t date">09:38</div></div>
<!--/ROWS-->
<!--MENU-->
<div class="menu" style="left:703px;top:231px;width:235px;height:604px"></div>
<div class="a" style="left:708px;top:478px;width:230px;height:25px;background:#404244;border-radius:3px 0 0 3px"></div>
<div class="mi" style="left:737px;top:234.5px">Open Message in New <u>T</u>ab</div>
<div class="mi" style="left:737px;top:259.5px">Open Message in New <u>W</u>indow</div>
<div class="mi" style="left:737px;top:284.5px">Ope<u>n</u> Message in Conversation</div>
<div class="mi" style="left:737px;top:318.5px"><u>R</u>eply to Sender Only</div>
<div class="mi" style="left:737px;top:343.5px">Reply to <u>A</u>ll</div>
<div class="mi" style="left:737px;top:368.5px"><u>F</u>orward</div>
<div class="mi" style="left:737px;top:393.5px">F<u>o</u>rward As</div>
<svg style="left:916px;top:400px" width="7" height="11" viewBox="0 0 7 11"><path d="M1 0.8l5 4.7-5 4.7" fill="none" stroke="#e0e0e0" stroke-width="1.2"/></svg>
<div class="mi" style="left:737px;top:418.5px">Redirect</div>
<div class="mi" style="left:737px;top:443.5px"><u>E</u>dit As New Message</div>
<div class="mi" style="left:737px;top:477.5px">Tag</div>
<svg style="left:916px;top:484px" width="7" height="11" viewBox="0 0 7 11"><path d="M1 0.8l5 4.7-5 4.7" fill="none" stroke="#e0e0e0" stroke-width="1.2"/></svg>
<div class="mi" style="left:737px;top:502.5px">Mar<u>k</u></div>
<svg style="left:916px;top:509px" width="7" height="11" viewBox="0 0 7 11"><path d="M1 0.8l5 4.7-5 4.7" fill="none" stroke="#e0e0e0" stroke-width="1.2"/></svg>
<div class="mi" style="left:737px;top:536.5px">Arc<u>h</u>ive</div>
<div class="mi" style="left:737px;top:561.5px"><u>M</u>ove To</div>
<svg style="left:916px;top:568px" width="7" height="11" viewBox="0 0 7 11"><path d="M1 0.8l5 4.7-5 4.7" fill="none" stroke="#e0e0e0" stroke-width="1.2"/></svg>
<div class="mi" style="left:737px;top:586.5px"><u>C</u>opy To</div>
<svg style="left:916px;top:593px" width="7" height="11" viewBox="0 0 7 11"><path d="M1 0.8l5 4.7-5 4.7" fill="none" stroke="#e0e0e0" stroke-width="1.2"/></svg>
<div class="mi" style="left:737px;top:611.5px">Move to "Junk" Aga<u>i</u>n</div>
<div class="mi" style="left:737px;top:636.5px">Co<u>n</u>vert To</div>
<svg style="left:916px;top:643px" width="7" height="11" viewBox="0 0 7 11"><path d="M1 0.8l5 4.7-5 4.7" fill="none" stroke="#e0e0e0" stroke-width="1.2"/></svg>
<div class="mi" style="left:737px;top:661.5px">Delete Message</div>
<div class="mi" style="left:737px;top:695.5px"><u>I</u>gnore Thread</div>
<div class="mi" style="left:737px;top:720.5px">Ignore Su<u>b</u>thread</div>
<div class="mi" style="left:737px;top:745.5px">Watch Thread</div>
<div class="mi" style="left:737px;top:779.5px"><u>S</u>ave As...</div>
<div class="mi" style="left:737px;top:804.5px"><u>P</u>rint...</div>
<div class="menu" style="left:933px;top:475px;width:167px;height:178px"></div>
<div class="mi" style="left:967px;top:479.5px;color:#e6e6e6"><u>N</u>ew Tag...</div>
<div class="mi" style="left:967px;top:504.5px;color:#e6e6e6"><u>M</u>anage Tags...</div>
<div class="mi" style="left:967px;top:538.5px;color:#e6e6e6">Remove All Tags (0)</div>
<div class="mi" style="left:967px;top:572.5px;color:#cf1d24"><u>1</u> TODO</div>
<div class="mi" style="left:967px;top:597.5px;color:#e5952a"><u>2</u> Pending</div>
<div class="mi" style="left:967px;top:622.5px;color:#24922b"><u>3</u> Review Later</div>
<!--/MENU-->
<!--OVER-->
<div class="a red" style="left:39px;top:86px;width:175px;height:26px"></div>
<div class="a red" style="left:38px;top:324px;width:212px;height:19px"></div>
<div class="a red" style="left:90px;top:425px;width:152px;height:24px"></div>
<svg style="left:0;top:0" width="1375" height="842" viewBox="0 0 1375 842">
<g stroke="rgba(0,0,0,0.35)" stroke-width="6" stroke-linecap="round" fill="none">
<path d="M273.8 154.1L367.3 202.8"/>
<path d="M648.6 229.6L709.7 466"/>
<path d="M788.6 496.6L933.7 622.1"/>
</g>
<g stroke="#00ff00" stroke-width="4" stroke-linecap="round" fill="#00ff00">
<path d="M273.8 154.1L367.3 202.8"/>
<path d="M648.6 229.6L709.7 466"/>
<path d="M788.6 496.6L933.7 622.1"/>
</g>
<g fill="#00ff00">
<path d="M389.4 214.4L371.6 195.1L363 210.6z"/>
<path d="M715.6 490.8L701.4 468.9L718 463.2z"/>
<path d="M952.7 638.5L939.6 615.7L927.8 628.5z"/>
</g>
</svg>
<!--/OVER-->
</body></html>
